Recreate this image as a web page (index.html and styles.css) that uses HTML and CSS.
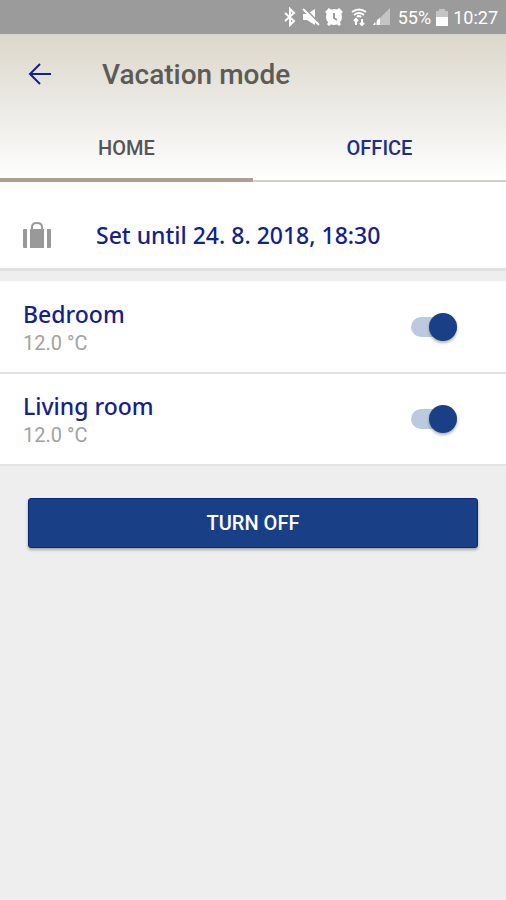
FILE: index.html
```html
<!DOCTYPE html>
<html lang="en">
<head>
    <meta charset="UTF-8">
    <meta name="viewport" content="width=device-width, initial-scale=1.0">
    <title>Vacation mode</title>
    <link rel="stylesheet" href="styles.css">
</head>
<body>
    <div class="status-bar">
        <svg width="14" height="20" viewBox="0 0 14 20" fill="none" stroke="#fff" stroke-width="2">
            <path d="M2 6l9 8-4 4V2l4 4-9 8"/>
        </svg>
        <svg width="18" height="18" viewBox="0 0 18 18" fill="#fff">
            <path d="M1 6h4l8-5v16l-8-5H1z"/>
            <path d="M3 1l15 15" stroke="#9b9b9b" stroke-width="2"/>
            <path d="M1 1l16 16" stroke="#fff" stroke-width="2"/>
        </svg>
        <svg width="18" height="18" viewBox="0 0 18 18" fill="#fff">
            <circle cx="9" cy="9" r="8"/>
            <path d="M1 5l4-4M17 5l-4-4M3 17l3-3M15 17l-3-3" stroke="#fff" stroke-width="3"/>
            <path d="M9 5v5l3 2" fill="none" stroke="#9b9b9b" stroke-width="2"/>
        </svg>
        <svg class="wifi" width="16" height="18" viewBox="0 0 16 18" fill="none" stroke="#fff" stroke-width="2">
            <path d="M1 4q7-5 14 0M3 7q5-4 10 0M6 9q2-2 4 0"/>
            <path d="M5 17v-6M3 13l2-2 2 2M11 11v6M9 15l2 2 2-2"/>
        </svg>
        <svg width="17" height="18" viewBox="0 0 17 18">
            <path d="M17 0v17H0z" fill="#c4c4c4"/>
            <path d="M2 14v3H0zM4 12l3-2v7H4z" fill="#fff"/>
        </svg>
        <span class="battery-level">55%</span>
        <svg width="12" height="18" viewBox="0 0 12 18">
            <path d="M3 1h6v2h3v15H0V3h3z" fill="#c4c4c4"/>
            <path d="M0 9h12v9H0z" fill="#fff"/>
        </svg>
        <span>10:27</span>
    </div>

    <header class="header">
        <div class="title-bar">
            <button type="button" class="back-button" aria-label="Back">
                <svg width="24" height="24" viewBox="0 0 24 24" fill="none" stroke="#14218a" stroke-width="2">
                    <path d="M23 12H2M12 2L2 12l10 10"/>
                </svg>
            </button>
            <h1>Vacation mode</h1>
        </div>
        <nav class="tabs">
            <a href="#home" class="tab active">HOME</a>
            <a href="#office" class="tab">OFFICE</a>
        </nav>
    </header>

    <main>
        <button type="button" class="schedule">
            <svg width="30" height="28" viewBox="0 0 30 28" fill="#999">
                <path d="M1 9q0-1 1-1h3v19H2q-1 0-1-1zM25 8h3q1 0 1 1v17q0 1-1 1h-3zM8 8h14v19H8z"/>
                <path d="M10 8V6q0-4 5-4t5 4v2" fill="none" stroke="#999" stroke-width="2"/>
            </svg>
            <span>Set until 24. 8. 2018, 18:30</span>
        </button>

        <div class="rooms">
            <div class="room">
                <div>
                    <label for="bedroom">Bedroom</label>
                    <p>12.0 °C</p>
                </div>
                <input type="checkbox" class="switch" id="bedroom" checked>
            </div>
            <div class="room">
                <div>
                    <label for="livingRoom">Living room</label>
                    <p>12.0 °C</p>
                </div>
                <input type="checkbox" class="switch" id="livingRoom" checked>
            </div>
        </div>

        <div class="actions">
            <button type="button" class="turn-off">TURN OFF</button>
        </div>
    </main>
</body>
</html>
```

FILE: styles.css
```css
* {
    box-sizing: border-box;
}
body {
    margin: 0;
    background-color: #eee;
    font-family: Roboto, sans-serif;
}
button {
    border: none;
    padding: 0;
    cursor: pointer;
}
.status-bar {
    display: flex;
    align-items: center;
    justify-content: flex-end;
    gap: 5px;
    height: 34px;
    padding: 0 8px;
    background-color: #9b9b9b;
    color: #fff;
    font-size: 18px;
}
.wifi {
    margin: 0 1px 0 3px;
}
.battery-level {
    margin-left: 3px;
}
.header {
    background: linear-gradient(#dcd7cb, #efeeea 60%, #fff);
}
.title-bar {
    display: flex;
    align-items: center;
    height: 80px;
    padding: 0 28px;
    gap: 50px;
}
.back-button {
    display: flex;
    background: none;
}
h1 {
    margin: 0;
    color: #5c5b58;
    font-size: 28px;
    font-weight: 500;
}
.tabs {
    display: flex;
    border-bottom: 2px solid #d2cec9;
}
.tab {
    flex: 1;
    height: 66px;
    line-height: 68px;
    color: #1c2f87;
    font-size: 20px;
    font-weight: 500;
    text-align: center;
    text-decoration: none;
}
.tab.active {
    height: 68px;
    margin-bottom: -2px;
    border-bottom: 4px solid #ae9f91;
    color: #555;
}
.schedule {
    display: flex;
    align-items: center;
    gap: 44px;
    width: 100%;
    height: 89px;
    padding: 20px 22px 0;
    border-bottom: 3px solid #e2e2e2;
    background-color: #fff;
    color: #14218a;
    font-family: "Noto Sans", sans-serif;
    font-size: 23px;
    font-weight: 500;
}
.rooms {
    margin-top: 10px;
}
.room {
    display: flex;
    align-items: center;
    justify-content: space-between;
    height: 93px;
    padding: 0 49px 0 23px;
    border-bottom: 2px solid #e2e2e2;
    background-color: #fff;
}
.room:last-child {
    height: 92px;
}
.room label {
    display: block;
    color: #14218a;
    font-family: "Noto Sans", sans-serif;
    font-size: 23px;
    font-weight: 500;
    line-height: 32px;
}
.room p {
    margin: 0;
    color: #a2a2a2;
    font-size: 20px;
    line-height: 26px;
}
.switch {
    appearance: none;
    position: relative;
    width: 46px;
    height: 20px;
    margin: 0;
    border-radius: 10px;
    background-color: #ccc;
    cursor: pointer;
}
.switch::before {
    content: "";
    position: absolute;
    top: -4px;
    left: 0;
    width: 28px;
    height: 28px;
    border-radius: 50%;
    background-color: #fff;
    box-shadow: 0 2px 3px rgba(0, 0, 0, 0.3);
}
.switch:checked {
    background-color: #bccae0;
}
.switch:checked::before {
    left: 18px;
    background-color: #194087;
}
.actions {
    padding: 32px 28px;
}
.turn-off {
    width: 100%;
    height: 50px;
    border: 1px solid #0a2878;
    border-radius: 3px;
    background-color: #194087;
    box-shadow: 0 2px 3px rgba(0, 0, 0, 0.3);
    color: #fff;
    font-family: Roboto, sans-serif;
    font-size: 20px;
    font-weight: 500;
}
```
